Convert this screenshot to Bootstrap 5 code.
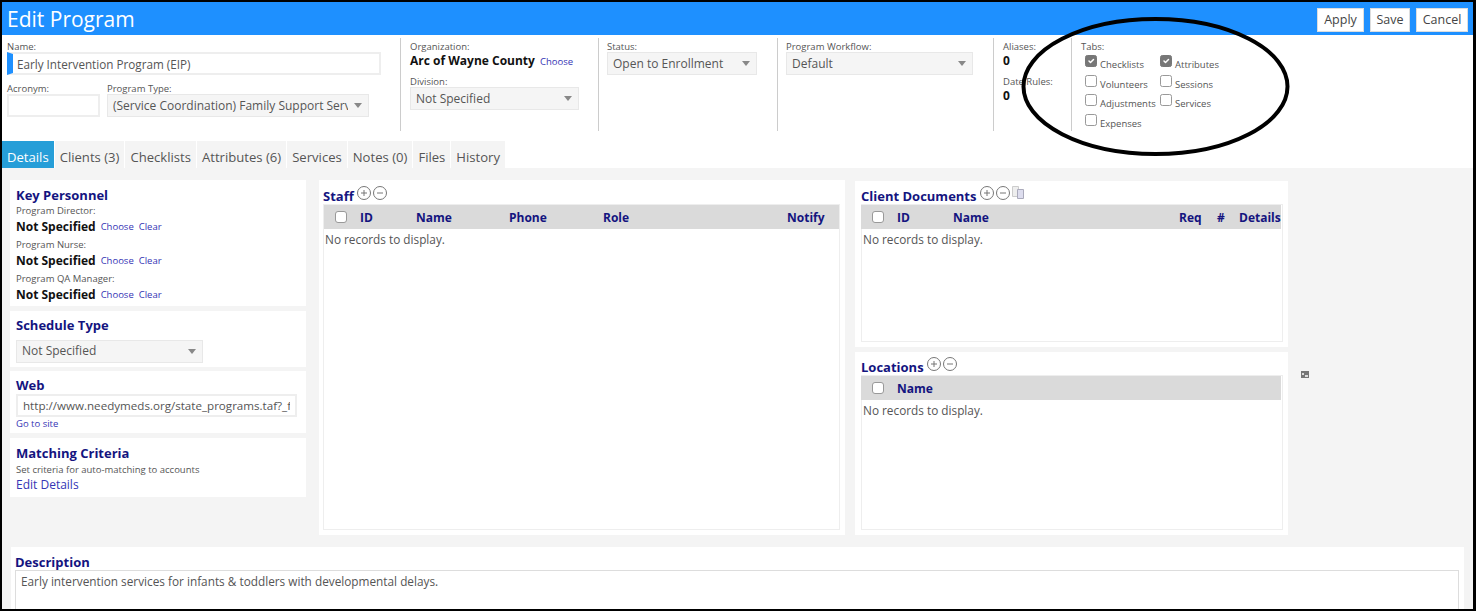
<!DOCTYPE html>
<html lang="en">
<head>
    <meta charset="UTF-8">
    <meta name="viewport" content="width=device-width, initial-scale=1">
    <title>Edit Program</title>
    <link href="https://cdn.jsdelivr.net/npm/bootstrap@5.3.2/dist/css/bootstrap.min.css" rel="stylesheet">
    <style>
        body {
            margin: 0;
            font-family: "Open Sans", "Noto Sans", sans-serif;
            font-size: 12px;
            color: #555;
            background: #000;
        }
        .app-frame {
            position: relative;
            width: 1476px;
            height: 611px;
            overflow: hidden;
            background: #f4f4f4;
            border: solid #000;
            border-width: 2px 3px 2px 2px;
        }
        /* header */
        .title-bar {
            height: 33px;
            padding: 0 5px;
            background: #1e90ff;
        }
        .title-bar h1 {
            margin: 0;
            padding-top: 2px;
            font-size: 21px;
            font-weight: 400;
            color: #fff;
        }
        .bar-btn {
            height: 24px;
            padding: 0;
            font-size: 12.5px;
            line-height: 22px;
            color: #444;
            background: #fff;
            border: 1px solid #ddd;
            border-radius: 0;
        }
        .btn-apply { width: 47px; }
        .btn-keep { width: 40px; }
        .btn-cancel { width: 52px; }
        .bar-actions { gap: 6px; padding-top: 2px; }
        /* top strip */
        .top-strip { background: #fff; height: 133px; }
        .info-row { height: 96px; padding-top: 3px; }
        .info-col { height: 93px; padding-left: 9px; border-left: 1px solid #ccc; }
        .col-main { width: 398px; padding-left: 5px; border-left: 0; }
        .col-org { width: 198px; }
        .col-status { width: 179px; padding-left: 8px; }
        .col-flow { width: 216px; padding-left: 8px; }
        .col-alias { width: 78px; }
        .fld-label { display: block; font-size: 9.5px; line-height: 11px; padding-top: 3px; color: #555; white-space: nowrap; }
        .strong-val { font-size: 12px; font-weight: 700; color: #111; line-height: 18px; }
        .org-val { margin-bottom: 2px; }
        .alias-gap { margin-top: 2.5px; }
        .mini-link { font-size: 9.5px; font-weight: 400; color: #3535b5; text-decoration: none; margin-left: 2px; }
        .site-link { display: block; margin: 0; line-height: 14px; }
        .edit-link { color: #3535b5; text-decoration: none; line-height: 18px; }
        .name-input, .acr-input, .web-input {
            height: 23px;
            padding: 0 5px;
            font-size: 12px;
            color: #555;
            border: 2px solid #eee;
            border-radius: 0;
        }
        .name-input { width: 374px; padding-left: 4px; font-size: 11.7px; border-left: 6px solid #1e90ff; }
        .acr-input { width: 93px; }
        .pick {
            height: 23px;
            padding: 0 20px 0 5px;
            font-size: 12px;
            color: #555;
            background-color: #f5f5f5;
            background-image: url("data:image/svg+xml,%3csvg xmlns='http://www.w3.org/2000/svg' viewBox='0 0 8 5'%3e%3cpath fill='%23888' d='M0 0h8L4 5z'/%3e%3c/svg%3e");
            background-size: 8px 5px;
            background-position: right 6px center;
            border: 1px solid #e8e8e8;
            border-radius: 0;
        }
        .pick-type { width: 262px; }
        .pick-mid { width: 169px; }
        .pick-status { width: 150px; }
        .pick-flow { width: 187px; }
        .pick-sched { width: 187px; }
        .type-gap { margin-left: 7px; }
        .lower-fields { margin-top: 5px; }
        .tab-flags {
            display: grid;
            grid-template-columns: 75px auto;
            margin: 1px 0 0 4px;
            width: 150px;
        }
        .tab-flags label { display: flex; height: 19.6px; font-size: 9.5px; color: #555; white-space: nowrap; }
        .tab-flags span { padding: 5px 0 0 2px; line-height: 14px; }
        .flag, .grid-check {
            width: 12px;
            height: 12px;
            margin: 0;
            border: 1px solid #999;
            border-radius: 2px;
        }
        .flag { margin: 2px 1px 0 0; }
        .flag:checked { background-color: #777; border-color: #777; }
        /* tabs */
        .tab-row { gap: 1px; margin-top: 10px; }
        .tab-row .nav-link {
            height: 27px;
            padding: 0 5px;
            font-size: 13.1px;
            line-height: 32px;
            color: #555;
            background: #f4f4f4;
            border-radius: 0;
        }
        .tab-row .nav-link.active { background: #269ed8; color: #fff; }
        /* panels */
        .work-area { padding: 12px 0 0 8px; gap: 13px; height: 379px; }
        .side-col { width: 296px; gap: 4.5px; }
        .panel { border: 0; border-radius: 0; background: #fff; padding: 6px; }
        .panel-head { margin: 0; height: 18px; font-size: 13px; font-weight: 700; color: #14147f; line-height: 18px; }
        .head-icons { vertical-align: 1px; }
        .key-panel { padding: 6px 6px 0; }
        .sched-panel { padding: 5px 6px 4px; }
        .sched-panel .panel-head { margin-bottom: 6px; }
        .web-panel { padding: 5px 6px 2px; }
        .match-panel { padding: 6px 6px 3px; }
        .match-panel .panel-head { margin-bottom: 1px; }
        .person-label { padding-top: 1px; font-size: 9.5px; line-height: 12px; color: #555; }
        .person-row { display: flex; align-items: center; gap: 3px; height: 21px; }
        .person-row .strong-val { margin-top: -2px; }
        .web-input { display: block; width: 281px; font-size: 11.6px; }
        .mid-col { width: 526px; height: 355px; padding: 6px 5px 5px 4px; }
        .right-col { width: 433px; gap: 5px; margin: 1px 0 0 -3px; }
        .doc-panel { height: 166px; padding: 5px 5px 5px 6px; }
        .loc-panel { height: 183px; padding: 5px 5px 5px 6px; }
        .doc-panel .panel-head, .loc-panel .panel-head { line-height: 20px; }
        .grid-box { flex: 1 1 0; min-height: 0; background: #fff; border: 1px solid #eee; }
        .grid-tbl { table-layout: fixed; margin: 0; width: 100%; }
        .doc-panel .grid-tbl, .loc-panel .grid-tbl { margin-left: -1px; }
        .grid-tbl th {
            height: 24px;
            padding: 1px 0 0;
            font-size: 12px;
            color: #14147f;
            background: #dadada;
            border: 0;
            vertical-align: middle;
        }
        .grid-tbl .c-chk { width: 36px; padding: 0 0 0 11px; }
        .grid-check { display: block; }
        .c-id { width: 56px; }
        .c-s-name { width: 93px; }
        .c-s-phone { width: 94px; }
        .c-s-role { width: 184px; }
        .c-d-req { width: 38px; }
        .c-d-num { width: 22px; }
        .c-d-det { width: 42px; }
        .c-d-name { width: 226px; }
        .no-rows { padding: 2px 1px; font-size: 11.8px; color: #555; line-height: 16px; }
        .side-glyph { margin-top: 191px; }
        .desc-panel { margin: 0 0 0 9px; width: 1453px; height: 70px; overflow: hidden; padding: 6px 4px; }
        .desc-panel .panel-head { margin-bottom: -1px; }
        .desc-box { width: 1444px; height: 60px; padding: 1px 5px; font-size: 11.8px; line-height: 18px; color: #555; border: 1px solid #ddd; border-radius: 0; resize: none; }
        .ring { position: absolute; left: 0; top: 0; pointer-events: none; }
    </style>
</head>
<body>
<div class="app-frame">
    <!-- title bar -->
    <div class="title-bar d-flex align-items-center justify-content-between">
        <h1>Edit Program</h1>
        <div class="d-flex bar-actions">
            <button type="button" class="btn bar-btn btn-apply">Apply</button>
            <button type="button" class="btn bar-btn btn-keep">Save</button>
            <button type="button" class="btn bar-btn btn-cancel">Cancel</button>
        </div>
    </div>

    <!-- program fields -->
    <div class="top-strip">
        <div class="info-row d-flex">
            <div class="info-col col-main">
                <label class="fld-label">Name:</label>
                <input type="text" class="form-control name-input" value="Early Intervention Program (EIP)">
                <div class="d-flex lower-fields">
                    <div>
                        <label class="fld-label">Acronym:</label>
                        <input type="text" class="form-control acr-input">
                    </div>
                    <div class="type-gap">
                        <label class="fld-label">Program Type:</label>
                        <select class="form-select pick pick-type"><option>(Service Coordination) Family Support Services</option></select>
                    </div>
                </div>
            </div>
            <div class="info-col col-org">
                <label class="fld-label">Organization:</label>
                <div class="strong-val org-val">Arc of Wayne County <a href="#" class="mini-link">Choose</a></div>
                <label class="fld-label">Division:</label>
                <select class="form-select pick pick-mid"><option>Not Specified</option></select>
            </div>
            <div class="info-col col-status">
                <label class="fld-label">Status:</label>
                <select class="form-select pick pick-status"><option>Open to Enrollment</option></select>
            </div>
            <div class="info-col col-flow">
                <label class="fld-label">Program Workflow:</label>
                <select class="form-select pick pick-flow"><option>Default</option></select>
            </div>
            <div class="info-col col-alias">
                <label class="fld-label">Aliases:</label>
                <div class="strong-val">0</div>
                <label class="fld-label alias-gap">Date Rules:</label>
                <div class="strong-val">0</div>
            </div>
            <div class="info-col">
                <label class="fld-label">Tabs:</label>
                <div class="tab-flags">
                    <label><input type="checkbox" class="form-check-input flag" checked><span>Checklists</span></label>
                    <label><input type="checkbox" class="form-check-input flag" checked><span>Attributes</span></label>
                    <label><input type="checkbox" class="form-check-input flag"><span>Volunteers</span></label>
                    <label><input type="checkbox" class="form-check-input flag"><span>Sessions</span></label>
                    <label><input type="checkbox" class="form-check-input flag"><span>Adjustments</span></label>
                    <label><input type="checkbox" class="form-check-input flag"><span>Services</span></label>
                    <label><input type="checkbox" class="form-check-input flag"><span>Expenses</span></label>
                </div>
            </div>
        </div>
        <ul class="nav tab-row">
            <li class="nav-item"><a class="nav-link active" href="#">Details</a></li>
            <li class="nav-item"><a class="nav-link" href="#">Clients (3)</a></li>
            <li class="nav-item"><a class="nav-link" href="#">Checklists</a></li>
            <li class="nav-item"><a class="nav-link" href="#">Attributes (6)</a></li>
            <li class="nav-item"><a class="nav-link" href="#">Services</a></li>
            <li class="nav-item"><a class="nav-link" href="#">Notes (0)</a></li>
            <li class="nav-item"><a class="nav-link" href="#">Files</a></li>
            <li class="nav-item"><a class="nav-link" href="#">History</a></li>
        </ul>
    </div>

    <!-- details tab -->
    <div class="work-area d-flex align-items-start">
        <div class="side-col d-flex flex-column">
            <div class="card panel key-panel">
                <h2 class="panel-head">Key Personnel</h2>
                <div class="person-label">Program Director:</div>
                <div class="person-row"><span class="strong-val">Not Specified</span> <a href="#" class="mini-link">Choose</a> <a href="#" class="mini-link">Clear</a></div>
                <div class="person-label">Program Nurse:</div>
                <div class="person-row"><span class="strong-val">Not Specified</span> <a href="#" class="mini-link">Choose</a> <a href="#" class="mini-link">Clear</a></div>
                <div class="person-label">Program QA Manager:</div>
                <div class="person-row"><span class="strong-val">Not Specified</span> <a href="#" class="mini-link">Choose</a> <a href="#" class="mini-link">Clear</a></div>
            </div>
            <div class="card panel sched-panel">
                <h2 class="panel-head">Schedule Type</h2>
                <select class="form-select pick pick-sched"><option>Not Specified</option></select>
            </div>
            <div class="card panel web-panel">
                <h2 class="panel-head">Web</h2>
                <input type="text" class="form-control web-input" value="http://www.needymeds.org/state_programs.taf?_function=detail">
                <a href="#" class="mini-link site-link">Go to site</a>
            </div>
            <div class="card panel match-panel">
                <h2 class="panel-head">Matching Criteria</h2>
                <div class="person-label">Set criteria for auto-matching to accounts</div>
                <a href="#" class="edit-link">Edit Details</a>
            </div>
        </div>

        <div class="card panel mid-col">
            <h2 class="panel-head">Staff
                <svg class="head-icons" width="31" height="14" viewBox="0 0 31 14" fill="none" stroke="#777"><circle cx="7" cy="7" r="6.500"/><path d="M4 7h6M7 4v6"/><circle cx="23" cy="7" r="6.500"/><path d="M20 7h6"/></svg>
            </h2>
            <div class="grid-box">
                <table class="table grid-tbl">
                    <thead><tr>
                        <th class="c-chk"><input type="checkbox" class="form-check-input grid-check"></th>
                        <th class="c-id">ID</th>
                        <th class="c-s-name">Name</th>
                        <th class="c-s-phone">Phone</th>
                        <th class="c-s-role">Role</th>
                        <th>Notify</th>
                    </tr></thead>
                </table>
                <div class="no-rows">No records to display.</div>
            </div>
        </div>

        <div class="right-col d-flex flex-column">
            <div class="card panel doc-panel">
                <h2 class="panel-head">Client Documents
                    <svg class="head-icons" width="46" height="14" viewBox="0 0 46 14" fill="none" stroke="#777"><circle cx="7" cy="7" r="6.500"/><path d="M4 7h6M7 4v6"/><circle cx="23" cy="7" r="6.500"/><path d="M20 7h6"/><path stroke="#ccc" fill="#eee" d="M32.500 .5h6v10h-6z"/><path stroke="#aab" fill="#dde" d="M37.500 3.500h6v9h-6z"/></svg>
                </h2>
                <div class="grid-box">
                    <table class="table grid-tbl">
                        <thead><tr>
                            <th class="c-chk"><input type="checkbox" class="form-check-input grid-check"></th>
                            <th class="c-id">ID</th>
                            <th class="c-d-name">Name</th>
                            <th class="c-d-req">Req</th>
                            <th class="c-d-num">#</th>
                            <th class="c-d-det">Details</th>
                        </tr></thead>
                    </table>
                    <div class="no-rows">No records to display.</div>
                </div>
            </div>
            <div class="card panel loc-panel">
                <h2 class="panel-head">Locations
                    <svg class="head-icons" width="31" height="14" viewBox="0 0 31 14" fill="none" stroke="#777"><circle cx="7" cy="7" r="6.500"/><path d="M4 7h6M7 4v6"/><circle cx="23" cy="7" r="6.500"/><path d="M20 7h6"/></svg>
                </h2>
                <div class="grid-box">
                    <table class="table grid-tbl">
                        <thead><tr>
                            <th class="c-chk"><input type="checkbox" class="form-check-input grid-check"></th>
                            <th>Name</th>
                        </tr></thead>
                    </table>
                    <div class="no-rows">No records to display.</div>
                </div>
            </div>
        </div>
        <svg class="side-glyph" width="8" height="7" viewBox="0 0 8 7"><path fill="#777" d="M0 0h8v7H0z"/><path fill="#ddd" d="M1 2h2v2H1zM4 4h3v2H4z"/></svg>
    </div>

    <div class="card panel desc-panel">
        <h2 class="panel-head">Description</h2>
        <textarea class="form-control desc-box">Early intervention services for infants &amp; toddlers with developmental delays.</textarea>
    </div>

    <!-- hand drawn ring from the annotated screenshot -->
    <svg class="ring" width="1472" height="200"><ellipse cx="1153.500" cy="84.500" rx="132" ry="67.500" fill="none" stroke="#000" stroke-width="4"/></svg>
</div>
<script src="https://cdn.jsdelivr.net/npm/bootstrap@5.3.2/dist/js/bootstrap.bundle.min.js"></script>
</body>
</html>
